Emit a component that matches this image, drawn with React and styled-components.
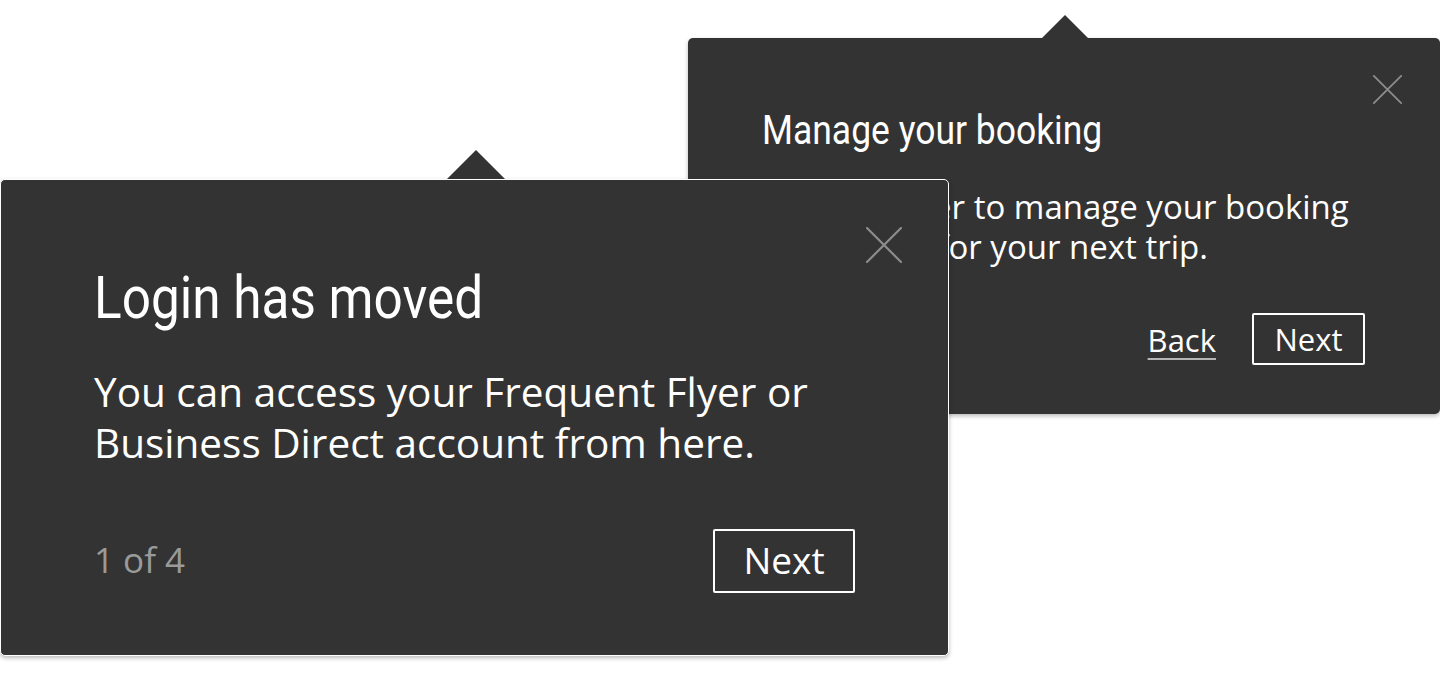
import React from "react";
import styled, { createGlobalStyle } from "styled-components";

const GlobalStyle = createGlobalStyle`
  html, body {
    margin: 0;
    padding: 0;
    background: #fff;
  }
  * {
    box-sizing: border-box;
  }
`;

// Close icon drawn as two thin strokes
const CloseIcon = ({ size }) => (
  <svg width={size} height={size} viewBox="0 0 36 36" fill="none">
    <path d="M1 1 L35 35 M35 1 L1 35" stroke="#8c8c8c" strokeWidth="2.2" strokeLinecap="round" />
  </svg>
);

const Popover = ({ variant, title, children, footer }) => {
  const big = variant === "front";
  return (
    <Card $big={big}>
      <Close $big={big} aria-label="Close">
        <CloseIcon size={big ? 36 : 29} />
      </Close>
      <Title $big={big}>
        <TitleText $big={big}>{title}</TitleText>
      </Title>
      <Body $big={big}>{children}</Body>
      <Footer $big={big}>{footer}</Footer>
    </Card>
  );
};

const App = () => {
  return (
    <>
      <GlobalStyle />
      <Canvas>
        <Popover
          variant="back"
          title="Manage your booking"
          footer={
            <>
              <span />
              <Actions>
                <BackLink href="#">Back</BackLink>
                <NextButton>Next</NextButton>
              </Actions>
            </>
          }
        >
          Use a header to manage your booking
          <br />
          or check in for your next trip.
        </Popover>

        <Popover
          variant="front"
          title="Login has moved"
          footer={
            <>
              <Step>1 of 4</Step>
              <NextButton $big>Next</NextButton>
            </>
          }
        >
          You can access your Frequent Flyer or
          <br />
          Business Direct account from here.
        </Popover>
      </Canvas>
    </>
  );
};

// STYLED COMPONENTS
const Canvas = styled.div`
  position: relative;
  width: 1440px;
  height: 680px;
  overflow: hidden;
  background: #fff;
`;

// popovers float over the page and over each other
const Card = styled.div`
  position: absolute;
  display: flex;
  flex-direction: column;
  background: #333333;
  color: #fff;
  border-radius: 5px;
  box-shadow: 0 2px 4px rgba(0, 0, 0, 0.28);
  top: ${(p) => (p.$big ? "179px" : "38px")};
  left: ${(p) => (p.$big ? "0" : "688px")};
  width: ${(p) => (p.$big ? "949px" : "752px")};
  height: ${(p) => (p.$big ? "477px" : "376px")};
  padding: ${(p) => (p.$big ? "88px 93px 0" : "72px 75px 0 74px")};
  border: ${(p) => (p.$big ? "1px solid #fff" : "none")};
  z-index: ${(p) => (p.$big ? 2 : 1)};

  &::before {
    content: "";
    position: absolute;
    width: 0;
    height: 0;
    border-style: solid;
    border-color: transparent transparent #333333 transparent;
    border-width: ${(p) => (p.$big ? "0 29px 29px 29px" : "0 23px 23px 23px")};
    top: ${(p) => (p.$big ? "-30px" : "-23px")};
    left: ${(p) => (p.$big ? "446px" : "354px")};
  }
`;

const Close = styled.button`
  position: absolute;
  display: flex;
  padding: 0;
  border: none;
  background: none;
  cursor: pointer;
  top: ${(p) => (p.$big ? "47px" : "37px")};
  right: ${(p) => (p.$big ? "46px" : "38px")};
`;

const Title = styled.h2`
  margin: 0;
  font-family: Roboto, "Liberation Sans", sans-serif;
  font-weight: 400;
  white-space: nowrap;
  font-size: ${(p) => (p.$big ? "60px" : "41px")};
  line-height: ${(p) => (p.$big ? "60px" : "41px")};
`;

// condensed display face: squeeze Roboto horizontally
const TitleText = styled.span`
  display: inline-block;
  transform: scaleX(${(p) => (p.$big ? 0.855 : 0.865)});
  transform-origin: left center;
`;

const Body = styled.p`
  margin: 0;
  font-family: "Open Sans", Lato, sans-serif;
  white-space: nowrap;
  font-size: ${(p) => (p.$big ? "40.5px" : "33px")};
  line-height: ${(p) => (p.$big ? "51px" : "40px")};
  margin-top: ${(p) => (p.$big ? "38px" : "36px")};
`;

const Footer = styled.div`
  display: flex;
  align-items: center;
  justify-content: space-between;
  margin-top: ${(p) => (p.$big ? "61px" : "46px")};
`;

const Actions = styled.div`
  display: flex;
  align-items: center;
  gap: 36px;
`;

const Step = styled.span`
  font-family: "Open Sans", Lato, sans-serif;
  font-size: 35px;
  line-height: 1;
  padding-bottom: 3px;
  color: #9a9a9a;
`;

const BackLink = styled.a`
  font-family: "Open Sans", Lato, sans-serif;
  font-size: 31px;
  line-height: 1;
  padding-top: 2px;
  color: #fff;
  text-decoration: underline;
  text-decoration-color: #b5b5b5;
  text-decoration-thickness: 2px;
  text-underline-offset: 6px;
`;

const NextButton = styled.button`
  display: flex;
  align-items: center;
  justify-content: center;
  background: transparent;
  color: #fff;
  border: 2px solid #fff;
  border-radius: 2px;
  font-family: "Open Sans", Lato, sans-serif;
  line-height: 1;
  cursor: pointer;
  padding: ${(p) => (p.$big ? "0 0 4px" : "1px 0 0")};
  width: ${(p) => (p.$big ? "142px" : "113px")};
  height: ${(p) => (p.$big ? "64px" : "52px")};
  font-size: ${(p) => (p.$big ? "37px" : "31px")};
`;

export default App;
